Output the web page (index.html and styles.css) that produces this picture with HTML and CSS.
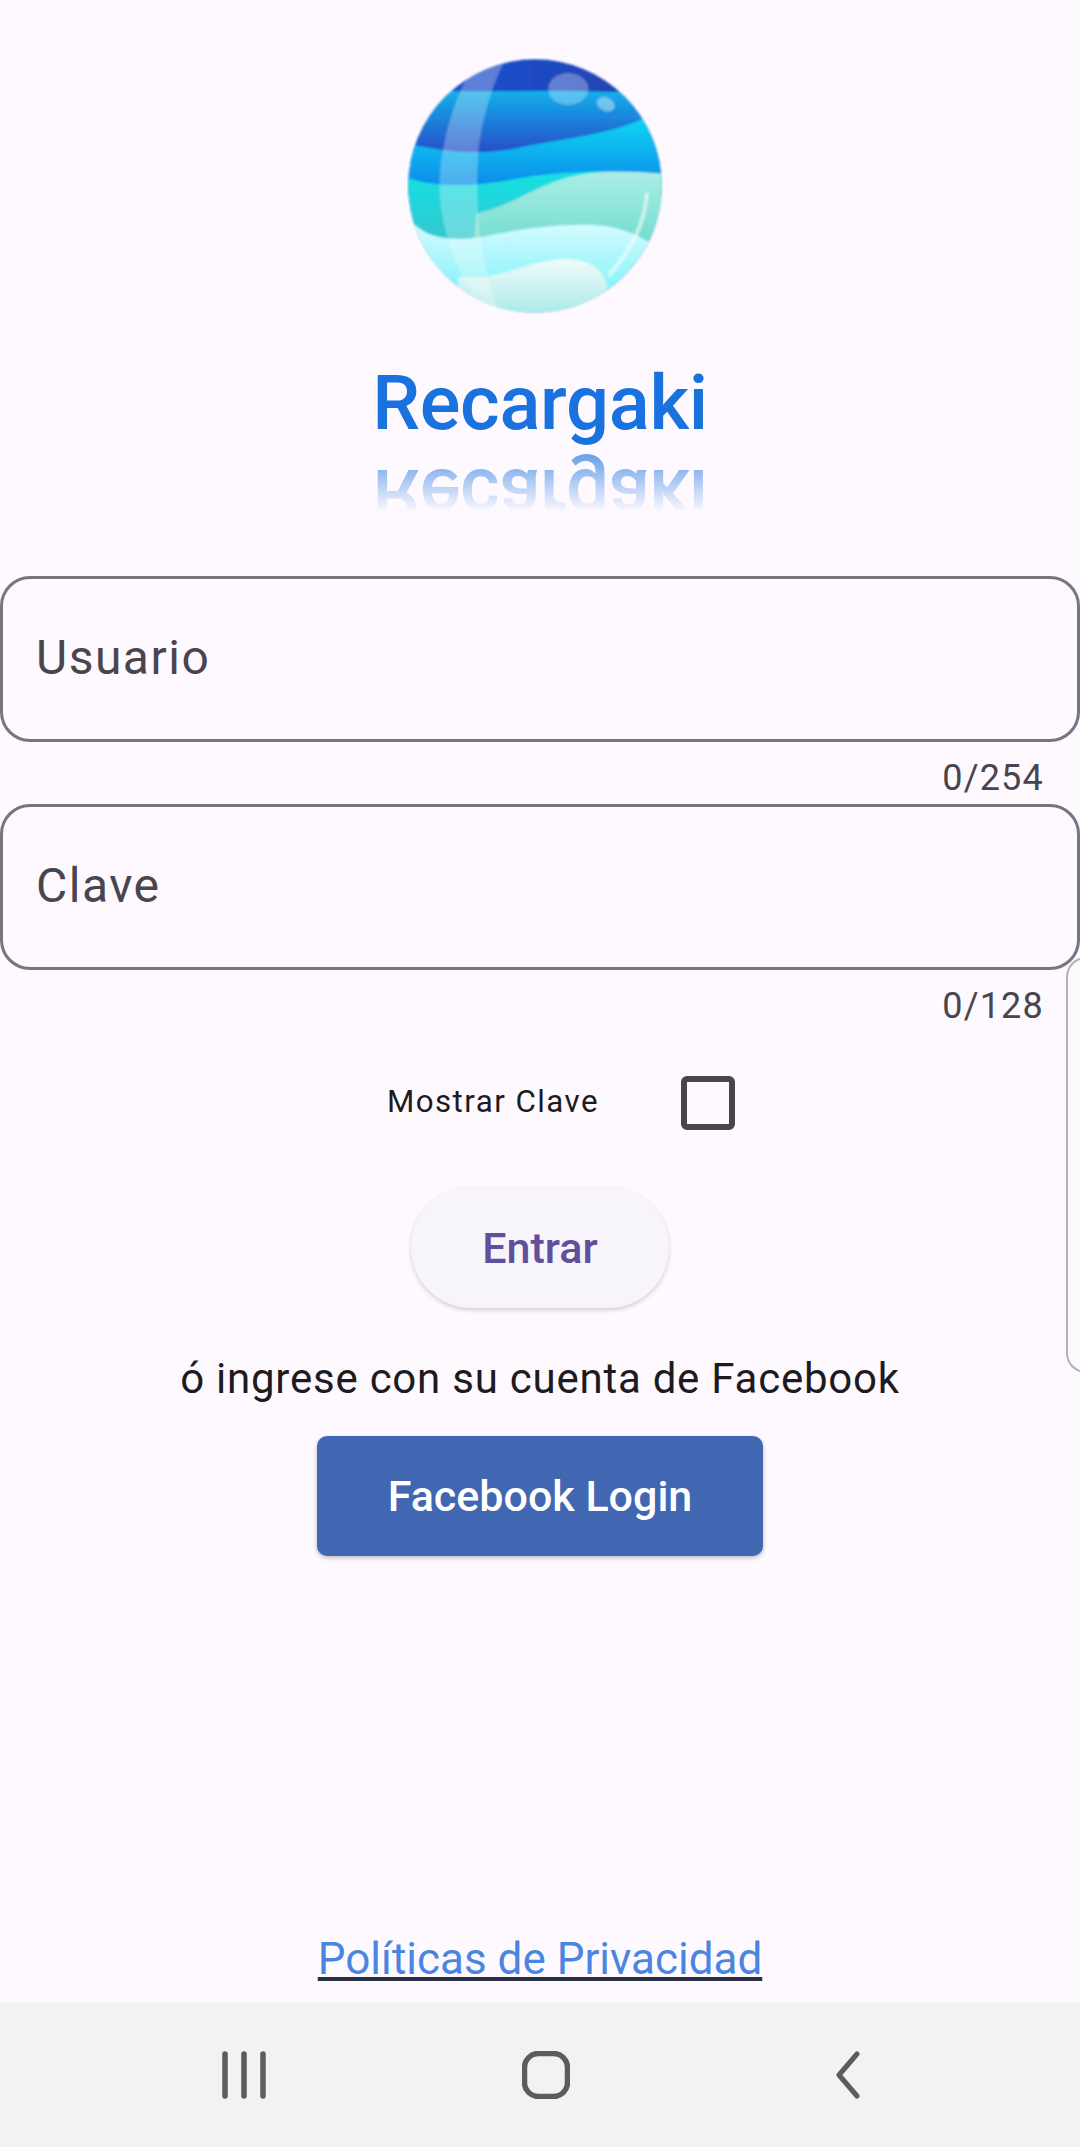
FILE: index.html
```html
<!DOCTYPE html>
<html lang="es">
<head>
    <meta charset="UTF-8">
    <meta name="viewport" content="width=device-width, initial-scale=1.0">
    <title>Recargaki</title>
    <link rel="stylesheet" href="styles.css">
</head>
<body>
    <div class="screen">
        <main class="content">
            <svg class="logo" viewBox="200 85 770 770" aria-label="Logo">
                <defs>
                    <clipPath id="ball"><circle cx="585" cy="470" r="381"/></clipPath>
                    <filter id="soft" x="-5%" y="-5%" width="110%" height="110%"><feGaussianBlur stdDeviation="2.500"/></filter>
                    <linearGradient id="g0" x1="0" y1="0" x2="1" y2="0"><stop offset="0" stop-color="#1a55d8"/><stop offset="1" stop-color="#2340ac"/></linearGradient>
                    <linearGradient id="g1" x1="0" y1="0" x2="0" y2="1"><stop offset="0" stop-color="#10b4ec"/><stop offset="1" stop-color="#2b3cc4"/></linearGradient>
                    <linearGradient id="g2" x1="0" y1="0" x2="0" y2="1"><stop offset="0" stop-color="#08d6f2"/><stop offset="1" stop-color="#0a78e8"/></linearGradient>
                    <linearGradient id="g3" x1="0" y1="0" x2="0" y2="1"><stop offset="0" stop-color="#14e0e4"/><stop offset="1" stop-color="#3fc0c4"/></linearGradient>
                    <linearGradient id="g4" x1="0" y1="0" x2="0" y2="1"><stop offset="0" stop-color="#aaeee6"/><stop offset="1" stop-color="#74dcd0"/></linearGradient>
                    <linearGradient id="g5" x1="0" y1="0" x2="0" y2="1"><stop offset="0" stop-color="#d4fbff"/><stop offset="1" stop-color="#66f0f8"/></linearGradient>
                    <linearGradient id="g6" x1="0" y1="0" x2="0" y2="1"><stop offset="0" stop-color="#f0fbfa"/><stop offset="1" stop-color="#a8eae8"/></linearGradient>
                </defs>
                <g filter="url(#soft)">
                    <g clip-path="url(#ball)">
                        <rect x="200" y="85" width="770" height="770" fill="url(#g0)"/>
                        <path d="M200 178 C400 195 600 175 900 190 L980 400 L200 400 Z" fill="url(#g1)"/>
                        <path d="M200 342 C330 372 450 378 560 350 C700 325 820 310 910 268 L980 268 L980 520 L200 520 Z" fill="url(#g2)"/>
                        <path d="M200 445 C300 478 420 470 530 448 C660 425 820 420 980 434 L980 700 L200 700 Z" fill="url(#g3)"/>
                        <path d="M410 552 C500 535 570 480 670 448 C760 420 870 425 980 434 L980 640 L400 640 Z" fill="url(#g4)"/>
                        <path d="M222 585 C260 625 340 640 430 622 C540 600 660 582 770 588 C830 592 880 610 930 640 L930 860 L200 860 Z" fill="url(#g5)"/>
                        <path d="M355 742 C470 760 540 700 660 690 C730 686 790 710 802 770 L802 860 L355 860 Z" fill="url(#g6)"/>
                        <path d="M385 135 C420 118 455 105 490 100 C455 170 425 270 415 360 C408 450 410 530 420 620 C432 700 450 780 480 850 L400 800 C350 720 300 600 298 470 C300 350 335 230 385 135 Z" fill="#ffffff" opacity="0.28"/>
                        <ellipse cx="685" cy="178" rx="60" ry="48" fill="#ffffff" opacity="0.3"/>
                        <ellipse cx="798" cy="224" rx="28" ry="20" transform="rotate(25 798 224)" fill="#ffffff" opacity="0.4"/>
                        <path d="M922 490 C915 590 870 670 805 740" fill="none" stroke="#ffffff" stroke-width="12" opacity="0.55"/>
                    </g>
                </g>
            </svg>

            <div class="brand">
                <div class="brand-name">Recargaki</div>
                <div class="brand-mirror" aria-hidden="true">Recargaki</div>
            </div>

            <div class="field"><span class="field-label">Usuario</span></div>
            <div class="counter">0/254</div>
            <div class="field"><span class="field-label">Clave</span></div>
            <div class="counter">0/128</div>

            <div class="show-row">
                <span class="show-label">Mostrar Clave</span>
                <span class="checkbox"></span>
            </div>

            <button type="button" class="btn-enter">Entrar</button>
            <p class="or-text">ó ingrese con su cuenta de Facebook</p>
            <button type="button" class="btn-facebook">Facebook Login</button>

            <a href="#" class="privacy">Políticas de Privacidad</a>
        </main>

        <div class="side-tab"></div>

        <nav class="navbar">
            <svg class="nav-icon" viewBox="0 0 48 48">
                <path d="M5 3V45M24 3V45M43 3V45" fill="none" stroke="#5c5c5c" stroke-width="5.5" stroke-linecap="round"/>
            </svg>
            <svg class="nav-icon" viewBox="0 0 48 48">
                <rect x="2.500" y="2.500" width="43" height="43" rx="14" fill="none" stroke="#5c5c5c" stroke-width="5.5"/>
            </svg>
            <svg class="nav-icon" viewBox="0 0 48 48">
                <path d="M33 3L15 24L33 45" fill="none" stroke="#5c5c5c" stroke-width="5" stroke-linecap="round" stroke-linejoin="round"/>
            </svg>
        </nav>
    </div>
</body>
</html>
```

FILE: styles.css
```css
* {
    box-sizing: border-box;
}

body {
    margin: 0;
    font-family: Roboto, Arial, sans-serif;
    background-color: #fef9ff;
}

.screen {
    position: relative;
    height: 2147px;
    display: flex;
    flex-direction: column;
    overflow: hidden;
}

.content {
    flex: 1;
    display: flex;
    flex-direction: column;
    align-items: center;
    padding-top: 58px;
}

.logo {
    width: 256px;
    height: 256px;
    display: block;
    margin-right: 10px;
}

.brand {
    width: 100%;
    height: 262px;
    padding-top: 44px;
    text-align: center;
}

.brand-name, .brand-mirror {
    height: 90px;
    line-height: 90px;
    font-size: 76px;
    font-weight: 500;
    letter-spacing: -0.3px;
    color: #1a72de;
}

.brand-mirror {
    margin-top: 3px;
    transform: scaleY(-1);
    -webkit-mask-image: linear-gradient(to bottom, transparent 32%, rgba(0, 0, 0, 0.7) 100%);
    mask-image: linear-gradient(to bottom, transparent 32%, rgba(0, 0, 0, 0.7) 100%);
}

.field {
    width: 100%;
    height: 166px;
    border: 3px solid #79747e;
    border-radius: 30px;
    display: flex;
    align-items: center;
    padding: 0 0 4px 33px;
}

.field-label {
    font-size: 48px;
    letter-spacing: 1.5px;
    color: #49454f;
}

.counter {
    width: 100%;
    height: 62px;
    padding: 16px 36px 0 0;
    text-align: right;
    font-size: 36px;
    line-height: 40px;
    letter-spacing: 1.2px;
    color: #49454f;
}

.show-row {
    display: flex;
    align-items: center;
    justify-content: center;
    gap: 82px;
    margin-top: 44px;
    padding-left: 42px;
    height: 54px;
}

.show-label {
    padding-bottom: 3px;
    font-size: 31.300px;
    letter-spacing: 1.450px;
    color: #1d1b20;
}

.checkbox {
    width: 54px;
    height: 54px;
    border: 6px solid #49454f;
    border-radius: 6px;
}

.btn-enter {
    width: 258px;
    height: 121px;
    margin-top: 57px;
    border: none;
    border-radius: 61px;
    background-color: #f8f4fb;
    color: #614f9c;
    font-family: inherit;
    font-size: 43px;
    font-weight: 500;
    box-shadow: 0 2px 4px rgba(0, 0, 0, 0.18);
}

.or-text {
    margin: 44px 0 0;
    font-size: 42px;
    line-height: 54px;
    letter-spacing: 0.76px;
    color: #1d1b20;
}

.btn-facebook {
    width: 446px;
    height: 120px;
    margin-top: 30px;
    border: none;
    border-radius: 10px;
    background-color: #4267b2;
    color: #fff;
    font-family: inherit;
    font-size: 43px;
    font-weight: 500;
    box-shadow: 0 2px 4px rgba(0, 0, 0, 0.25);
}

.privacy {
    margin-top: auto;
    margin-bottom: 19px;
    font-size: 44px;
    line-height: 50px;
    color: #4a86e0;
    text-decoration-color: #2a2f45;
}

.side-tab {
    position: absolute;
    top: 957px;
    left: 1066px;
    width: 30px;
    height: 416px;
    border: 2px solid #b5b0b8;
    border-right: none;
    border-radius: 20px 0 0 20px;
}

.navbar {
    height: 144px;
    display: flex;
    align-items: center;
    justify-content: center;
    gap: 254px;
    padding-left: 12px;
    background-color: #f2f2f2;
}

.nav-icon {
    width: 48px;
    height: 48px;
    display: block;
}
```
